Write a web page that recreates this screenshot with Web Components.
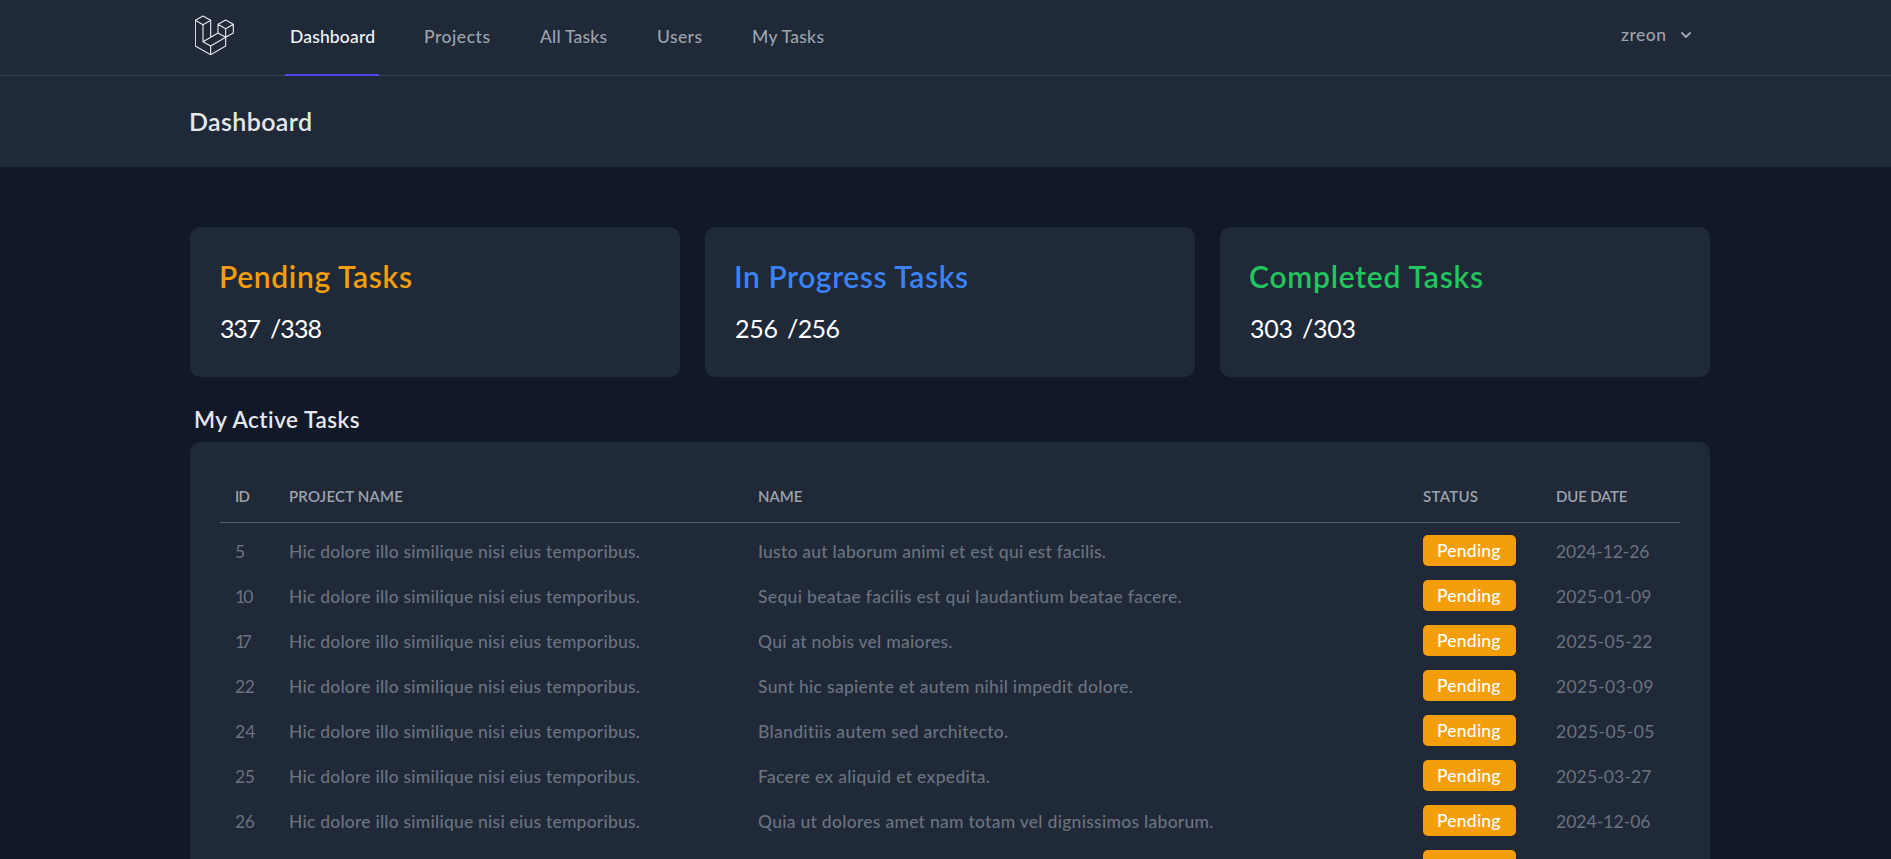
<!DOCTYPE html>
<html lang="en">

<head>
  <meta charset="UTF-8">
  <meta name="viewport" content="width=device-width, initial-scale=1.0">
  <title>Dashboard</title>
  <style>
    body {
      margin: 0;
      height: 859px;
      overflow: hidden;
      background: #111827;
      color: #e5e7eb;
      font-family: Lato, "Open Sans", sans-serif;
    }

    main {
      width: 1520px;
      margin-left: 190px;
      padding-top: 60px;
    }

    .stats {
      display: grid;
      grid-template-columns: repeat(3, 1fr);
      gap: 25px;
    }

    h3 {
      margin: 25px 0 5px 4px;
      font-size: 22.5px;
      line-height: 35px;
      font-weight: 600;
    }
  </style>
</head>

<body>
  <app-nav user="zreon"></app-nav>
  <page-header><fit-text width="123">Dashboard</fit-text></page-header>
  <main>
    <section class="stats">
      <stat-card color="#f59e0b" done="337" total="/338" widths="193,41,52">Pending Tasks</stat-card>
      <stat-card color="#3b82f6" done="256" total="/256" widths="234,43,53">In Progress Tasks</stat-card>
      <stat-card color="#22c55e" done="303" total="/303" widths="234,43,54">Completed Tasks</stat-card>
    </section>
    <h3><fit-text width="166">My Active Tasks</fit-text></h3>
    <task-table></task-table>
  </main>

  <script>
    // Text spread with letter-spacing to a given width
    class FitText extends HTMLElement {
      constructor() {
        super();
        this.attachShadow({ mode: 'open' });
        this.shadowRoot.innerHTML = `
          <style>
            :host { display: inline-block; white-space: nowrap; }
            span { display: inline-block; }
          </style>
          <span><slot></slot></span>
        `;
      }

      connectedCallback() {
        const $span = this.shadowRoot.querySelector('span');
        const width = parseFloat(this.getAttribute('width'));
        const gaps = this.textContent.length - 1;
        if (!width || gaps < 1) return;
        const natural = $span.getBoundingClientRect().width;
        $span.style.letterSpacing = `${(width - natural) / gaps}px`;
        this.style.width = `${width}px`;
      }
    }

    class AppLogo extends HTMLElement {
      constructor() {
        super();
        this.attachShadow({ mode: 'open' });
        this.shadowRoot.innerHTML = `
          <style>
            :host { display: block; width: 40px; height: 40px; }
            svg { display: block; }
          </style>
          <svg width="40" height="40" viewBox="45 45 120 120" fill="none" stroke="#e5e7eb" stroke-width="3.4" stroke-linejoin="round">
            <path d="M46 61 69 48 92 61 69 74Z" />
            <path d="M46 61V138L92 164 137 138V112" />
            <path d="M69 74V125L92 138V164M92 61V112M92 138 137 112M69 125 114 99" />
            <path d="M114 73 137 60 160 73 137 86ZM114 73V99L137 112 160 99V73M137 86V112" />
          </svg>
        `;
      }
    }

    class AppNav extends HTMLElement {
      constructor() {
        super();
        this.attachShadow({ mode: 'open' });
        this.links = [
          { text: 'Dashboard', width: 85, active: true },
          { text: 'Projects', width: 66 },
          { text: 'All Tasks', width: 67 },
          { text: 'Users', width: 45 },
          { text: 'My Tasks', width: 72 }
        ];
      }

      connectedCallback() {
        const links = this.links.map(({ text, width, active }) =>
          `<a class="${active ? 'active' : ''}"><fit-text width="${width}">${text}</fit-text></a>`).join('');

        this.shadowRoot.innerHTML = `
          <style>
            :host {
              display: block;
              box-sizing: border-box;
              height: 76px;
              background: #1f2937;
              border-bottom: 1px solid #374151;
              font-size: 17.5px;
              font-weight: 500;
              color: #9ca3af;
            }
            .bar {
              display: flex;
              width: 1520px;
              height: 76px;
              margin-left: 190px;
            }
            app-logo { margin: 15px 0 0 5px; }
            nav { display: flex; gap: 50px; margin-left: 50px; }
            a {
              box-sizing: border-box;
              height: 76px;
              padding-top: 2px;
              line-height: 70px;
              border-bottom: 2px solid transparent;
            }
            .active {
              margin-right: -5px;
              padding: 2px 4px 0 5px;
              color: #f3f4f6;
              border-color: #4f46e5;
            }
            .user {
              display: flex;
              gap: 10px;
              margin: 0 14px 0 auto;
              line-height: 70px;
            }
            .user svg { margin-top: 25px; }
          </style>
          <div class="bar">
            <app-logo></app-logo>
            <nav>${links}</nav>
            <div class="user">
              <fit-text width="45">${this.getAttribute('user')}</fit-text>
              <svg width="20" height="20" viewBox="0 0 20 20" fill="#9ca3af">
                <path fill-rule="evenodd" d="M5.293 7.293a1 1 0 011.414 0L10 10.586l3.293-3.293a1 1 0 111.414 1.414l-4 4a1 1 0 01-1.414 0l-4-4a1 1 0 010-1.414z" clip-rule="evenodd" />
              </svg>
            </div>
          </div>
        `;
      }
    }

    class PageHeader extends HTMLElement {
      constructor() {
        super();
        this.attachShadow({ mode: 'open' });
        this.shadowRoot.innerHTML = `
          <style>
            :host { display: block; height: 91px; background: #1f2937; }
            h2 {
              margin: 0 0 0 189px;
              font-size: 25px;
              line-height: 90px;
              font-weight: 600;
            }
          </style>
          <h2><slot></slot></h2>
        `;
      }
    }

    class StatCard extends HTMLElement {
      constructor() {
        super();
        this.attachShadow({ mode: 'open' });
      }

      connectedCallback() {
        const [titleWidth, doneWidth, totalWidth] = this.getAttribute('widths').split(',');
        this.shadowRoot.innerHTML = `
          <style>
            :host {
              display: block;
              box-sizing: border-box;
              height: 150px;
              padding: 29px 29px 0;
              border-radius: 10px;
              background: #1f2937;
            }
            h3 {
              margin: 0;
              color: ${this.getAttribute('color')};
              font-size: 30px;
              line-height: 40px;
              font-weight: 600;
            }
            p {
              display: flex;
              gap: 9px;
              margin: 13px 0 0 1px;
              color: #fff;
              font-size: 25px;
              line-height: 38px;
            }
          </style>
          <h3><fit-text width="${titleWidth}">${this.textContent}</fit-text></h3>
          <p>
            <fit-text width="${doneWidth}">${this.getAttribute('done')}</fit-text>
            <fit-text width="${totalWidth}">${this.getAttribute('total')}</fit-text>
          </p>
        `;
      }
    }

    class StatusBadge extends HTMLElement {
      constructor() {
        super();
        this.attachShadow({ mode: 'open' });
        this.shadowRoot.innerHTML = `
          <style>
            :host {
              display: block;
              box-sizing: border-box;
              width: 93px;
              height: 31px;
              padding-left: 14px;
              border-radius: 5px;
              background: #f59e0b;
              color: #fff;
              line-height: 31px;
            }
          </style>
          <slot></slot>
        `;
      }
    }

    class TaskTable extends HTMLElement {
      constructor() {
        super();
        this.attachShadow({ mode: 'open' });
        this.project = 'Hic dolore illo similique nisi eius temporibus.';
        this.tasks = [
          { id: 5, idWidth: 10, name: 'Iusto aut laborum animi et est qui est facilis.', width: 348, due: '2024-12-26', dueWidth: 93.5 },
          { id: 10, idWidth: 18.5, name: 'Sequi beatae facilis est qui laudantium beatae facere.', width: 424, due: '2025-01-09', dueWidth: 95.5 },
          { id: 17, idWidth: 17, name: 'Qui at nobis vel maiores.', width: 194.5, due: '2025-05-22', dueWidth: 96.5 },
          { id: 22, idWidth: 20, name: 'Sunt hic sapiente et autem nihil impedit dolore.', width: 375, due: '2025-03-09', dueWidth: 97.5 },
          { id: 24, idWidth: 20.5, name: 'Blanditiis autem sed architecto.', width: 250.5, due: '2025-05-05', dueWidth: 98.5 },
          { id: 25, idWidth: 20, name: 'Facere ex aliquid et expedita.', width: 232, due: '2025-03-27', dueWidth: 95.5 },
          { id: 26, idWidth: 20, name: 'Quia ut dolores amet nam totam vel dignissimos laborum.', width: 455.5, due: '2024-12-06', dueWidth: 94.5 }
        ];
      }

      connectedCallback() {
        const rows = this.tasks.map((task) => `
          <div class="row">
            <fit-text class="num" width="${task.idWidth}">${task.id}</fit-text>
            <fit-text width="351">${this.project}</fit-text>
            <fit-text width="${task.width}">${task.name}</fit-text>
            <status-badge><fit-text width="63.5">Pending</fit-text></status-badge>
            <fit-text class="num" width="${task.dueWidth}">${task.due}</fit-text>
          </div>
        `).join('');

        this.shadowRoot.innerHTML = `
          <style>
            :host {
              display: block;
              box-sizing: border-box;
              height: 417px;
              overflow: hidden;
              padding: 30px 30px 0;
              border-radius: 10px 10px 0 0;
              background: #1f2937;
              color: #6b7280;
              font-size: 17.5px;
              font-weight: 500;
            }
            .head, .row {
              display: grid;
              grid-template-columns: 54px 469px 665px 133px 124px;
              align-items: center;
              padding-left: 15px;
            }
            .head {
              box-sizing: border-box;
              height: 51px;
              margin-bottom: 5px;
              padding-bottom: 2px;
              border-bottom: 1px solid #566070;
              color: #9ca3af;
              font-size: 15px;
              font-weight: 600;
            }
            .row { height: 45px; }
            .row > fit-text { padding-top: 1px; }
            .num { font-weight: 400; }
            .rest status-badge { grid-column: 4; }
          </style>
          <div class="head">
            <fit-text width="15">ID</fit-text>
            <fit-text width="114">PROJECT NAME</fit-text>
            <fit-text width="44.5">NAME</fit-text>
            <fit-text width="55">STATUS</fit-text>
            <fit-text width="71.5">DUE DATE</fit-text>
          </div>
          ${rows}
          <div class="row rest"><status-badge></status-badge></div>
        `;
      }
    }

    customElements.define('app-logo', AppLogo);
    customElements.define('app-nav', AppNav);
    customElements.define('page-header', PageHeader);
    customElements.define('stat-card', StatCard);
    customElements.define('status-badge', StatusBadge);
    customElements.define('task-table', TaskTable);
    // last, so that the text is measured in its final styles
    customElements.define('fit-text', FitText);
  </script>
</body>

</html>
